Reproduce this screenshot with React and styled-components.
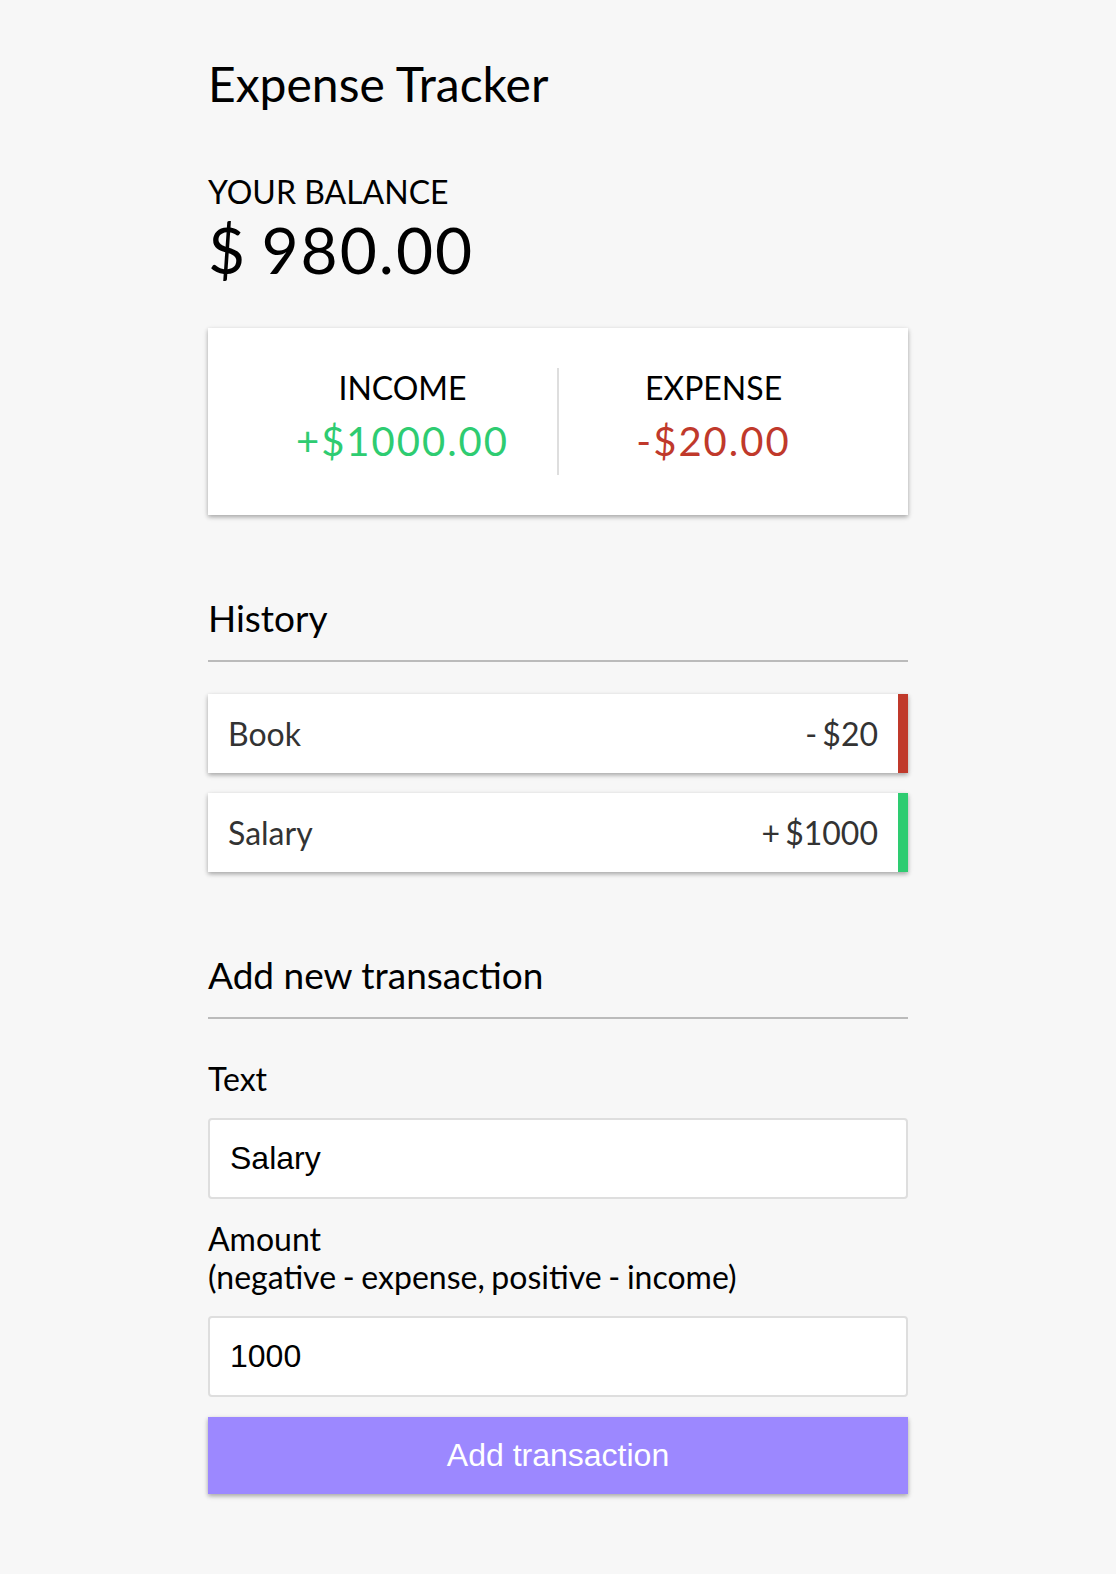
import React from 'react';
import styled, { createGlobalStyle } from 'styled-components';

const shadow = '0 2px 6px rgba(0, 0, 0, 0.12), 0 2px 4px rgba(0, 0, 0, 0.24)';

const GlobalStyle = createGlobalStyle`
  * { box-sizing: border-box; }
  body {
    margin: 0;
    background-color: #f7f7f7;
    font-family: Lato, 'Open Sans', sans-serif;
    color: #000;
  }
`;

const Container = styled.div`
  width: 700px;
  margin: 55px auto 60px;
`;

const Title = styled.h2`
  margin: 0;
  font-size: 48px;
  font-weight: 400;
  line-height: 58px;
`;

const BalanceLabel = styled.h4`
  margin: 60px 0 0;
  font-size: 32px;
  font-weight: 400;
  line-height: 38px;
  text-transform: uppercase;
`;

const Balance = styled.h1`
  margin: 0;
  font-size: 64px;
  font-weight: 400;
  line-height: 77px;
  letter-spacing: 2px;
  word-spacing: -4px;
`;

const IncExp = styled.div`
  display: flex;
  justify-content: space-between;
  margin: 40px 0;
  padding: 40px;
  background-color: #fff;
  box-shadow: ${shadow};
`;

const IncExpCol = styled.div`
  flex: 1;
  text-align: center;
  border-right: ${(p) => (p.$divider ? '2px solid #dedede' : '0')};
`;

const ColLabel = styled.h4`
  margin: 0;
  font-size: 32px;
  font-weight: 400;
  line-height: 39px;
  text-transform: uppercase;
`;

const Money = styled.p`
  margin: 10px 0;
  font-size: 40px;
  line-height: 48px;
  letter-spacing: 2px;
  color: ${(p) => (p.$plus ? '#2ecc71' : '#c0392b')};
`;

const SectionTitle = styled.h3`
  margin: 80px 0 20px;
  padding-bottom: 20px;
  border-bottom: 2px solid #bbb;
  font-size: 37px;
  font-weight: 400;
  line-height: 45px;
`;

const List = styled.ul`
  list-style: none;
  padding: 0;
  margin: 32px 0 80px;
`;

const Item = styled.li`
  display: flex;
  justify-content: space-between;
  margin: 20px 0;
  padding: 20px;
  background-color: #fff;
  box-shadow: ${shadow};
  color: #333;
  font-size: 32px;
  line-height: 39px;
  border-right: 10px solid ${(p) => (p.$plus ? '#2ecc71' : '#c0392b')};
`;

const Amount = styled.span`
  word-spacing: -3px;
`;

const Field = styled.div``;

const Label = styled.label`
  display: inline-block;
  margin: 21px 0 20px;
  font-size: 32px;
  line-height: 38px;
  word-spacing: -1.5px;
`;

const Input = styled.input`
  display: block;
  width: 100%;
  padding: 20px;
  border: 2px solid #dedede;
  border-radius: 4px;
  background: #fff;
  font-family: 'Liberation Sans', Arial, sans-serif;
  font-size: 32px;
  line-height: 37px;
  color: #000;
  outline: none;
`;

const Button = styled.button`
  display: block;
  width: 100%;
  margin: 20px 0 60px;
  padding: 20px;
  border: 0;
  background-color: #9c88ff;
  box-shadow: ${shadow};
  color: #fff;
  font-family: 'Liberation Sans', Arial, sans-serif;
  font-size: 32px;
  line-height: 37px;
  cursor: pointer;
`;

const transactions = [
  { id: 1, text: 'Book', amount: -20 },
  { id: 2, text: 'Salary', amount: 1000 },
];

export default function App() {
  return (
    <>
      <GlobalStyle />
      <Container>
        <Title>Expense Tracker</Title>
        <BalanceLabel>Your Balance</BalanceLabel>
        <Balance>$ 980.00</Balance>

        <IncExp>
          <IncExpCol $divider>
            <ColLabel>Income</ColLabel>
            <Money $plus>+$1000.00</Money>
          </IncExpCol>
          <IncExpCol>
            <ColLabel>Expense</ColLabel>
            <Money>-$20.00</Money>
          </IncExpCol>
        </IncExp>

        <SectionTitle>History</SectionTitle>
        <List>
          {transactions.map((t) => (
            <Item key={t.id} $plus={t.amount > 0}>
              {t.text}
              <Amount>
                {t.amount < 0 ? '-' : '+'} ${Math.abs(t.amount)}
              </Amount>
            </Item>
          ))}
        </List>

        <SectionTitle>Add new transaction</SectionTitle>
        <form onSubmit={(e) => e.preventDefault()}>
          <Field>
            <Label htmlFor="text">Text</Label>
            <Input type="text" id="text" defaultValue="Salary" />
          </Field>
          <Field>
            <Label htmlFor="amount">
              Amount <br />
              (negative - expense, positive - income)
            </Label>
            <Input type="number" id="amount" defaultValue="1000" />
          </Field>
          <Button>Add transaction</Button>
        </form>
      </Container>
    </>
  );
}
